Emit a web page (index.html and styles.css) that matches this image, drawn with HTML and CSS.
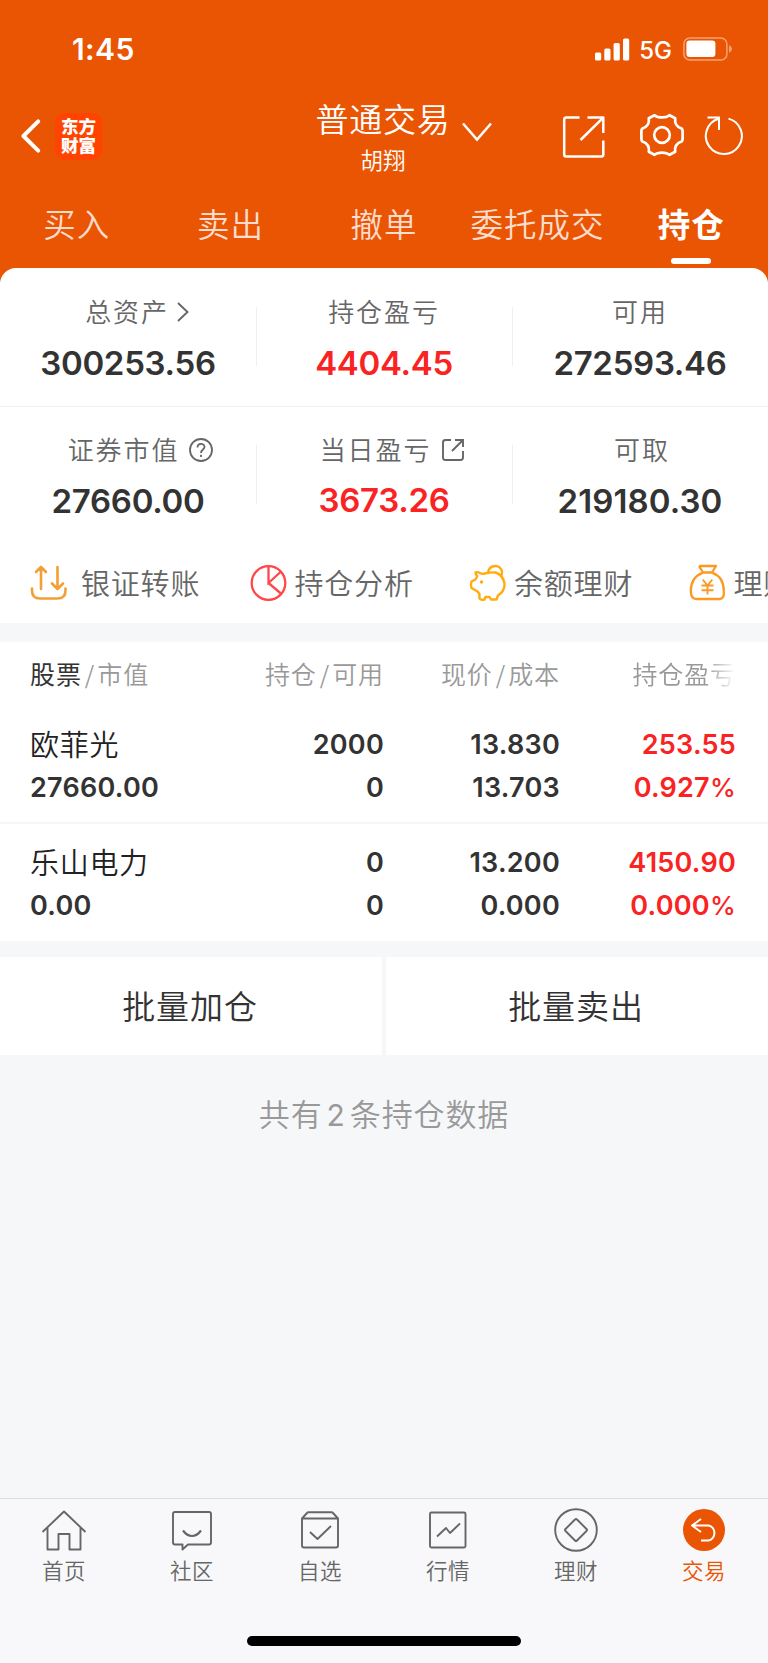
FILE: index.html
```html
<!DOCTYPE html>
<html lang="zh-CN">
<head>
<meta charset="utf-8">
<title>普通交易 - 持仓</title>
<link rel="stylesheet" href="styles.css">
</head>
<body>
<div class="app">
  <header class="top">
    <div class="status">
      <span class="time">1:45</span>
      <div class="status-right">
        <svg class="signal" width="35" height="23" viewBox="0 0 35 23" fill="#fff"><rect x="0" y="14.5" width="6.2" height="8" rx="1.6"/><rect x="9.3" y="10.5" width="6.2" height="12" rx="1.6"/><rect x="18.6" y="5" width="6.2" height="17.5" rx="1.6"/><rect x="28" y="0.5" width="6.2" height="22" rx="1.6"/></svg>
        <span class="net">5G</span>
        <svg class="battery" width="50" height="24" viewBox="0 0 50 24"><rect x="0.9" y="0.9" width="43" height="22.2" rx="6" fill="none" stroke="#f6a173" stroke-width="1.5"/><rect x="3.4" y="3.6" width="29" height="16.4" rx="3.2" fill="#fff"/><path d="M46 8.3q3 1.2 3 3.7t-3 3.7z" fill="#f6a173"/></svg>
      </div>
    </div>
    <div class="nav">
      <div class="nav-left">
        <svg class="back" width="22" height="36" viewBox="0 0 22 36"><path d="M18.2 3.3L3.4 18l14.8 14.7" fill="none" stroke="#fff" stroke-width="4" stroke-linecap="round" stroke-linejoin="round"/></svg>
        <div class="logo"><span>东方</span><span>财富</span></div>
      </div>
      <div class="title"><span class="title-main">普通交易</span><span class="title-sub">胡翔</span></div>
      <svg class="chev" width="32" height="22" viewBox="0 0 32 22"><path d="M2 2.5L16 18.5L30 2.5" fill="none" stroke="#fff" stroke-width="2.5"/></svg>
      <svg class="share" width="44" height="44" viewBox="0 0 44 44" fill="none" stroke="#fff" stroke-width="2.5" stroke-linejoin="round"><path d="M17.500 2.400H4.200a2 2 0 0 0-2 2V39.500a2 2 0 0 0 2 2H39.300a2 2 0 0 0 2-2V25.500M25.500 2.400H41.300V18M41 2.800L18.500 25"/></svg>
      <svg class="gear" width="46" height="46" viewBox="-23 -23 46 46" fill="none" stroke="#fff" stroke-width="2.7" stroke-linejoin="round"><path d="M-7.500-19.800C-4-16.800 4-16.800 7.500-19.800L13.200-16.800C12.500-11.500 15-8 19.600-6.500Q20.600-5.500 20.600-4V4Q20.600 5.500 19.600 6.500C15 8 12.500 11.500 13.200 16.800L7.500 19.800C4 16.800-4 16.800-7.500 19.800L-13.200 16.800C-12.500 11.500-15 8-19.600 6.500Q-20.600 5.500-20.600 4V-4Q-20.600-5.500-19.600-6.500C-15-8-12.500-11.500-13.200-16.800Z"/><circle r="7.800"/></svg>
      <svg class="refresh" width="40" height="42" viewBox="0 0 40 42" fill="none" stroke="#fff" stroke-width="2"><path d="M24.500 3.600A18 18 0 1 1 14.500 3.800M3.500 2.500H15V15"/></svg>
    </div>
    <nav class="tabs">
      <span class="tab">买入</span><span class="tab">卖出</span><span class="tab">撤单</span><span class="tab">委托成交</span><span class="tab active">持仓</span>
    </nav>
  </header>

  <main class="body">
    <section class="summary">
      <div class="cells">
        <div class="cell"><div class="label l-total">总资产<svg class="gt" width="14" height="20" viewBox="0 0 14 20"><path d="M2 1L11.500 10L2 19" fill="none" stroke="#666" stroke-width="1.900"/></svg></div><div class="value">300253.56</div></div>
        <div class="cell"><div class="label">持仓盈亏</div><div class="value red">4404.45</div></div>
        <div class="cell"><div class="label">可用</div><div class="value">272593.46</div></div>
      </div>
      <div class="cells second">
        <div class="cell"><div class="label l-market">证券市值<svg class="help" width="24" height="24" viewBox="0 0 24 24" fill="none" stroke="#666" stroke-width="1.800"><circle cx="12" cy="12" r="11"/><path d="M8.500 9.500C8.500 4.800 15.500 4.800 15.500 9C15.500 11.500 12 11.500 12 15M12 16.800v2.200"/></svg></div><div class="value">27660.00</div></div>
        <div class="cell"><div class="label l-day">当日盈亏<svg class="link" width="24" height="24" viewBox="0 0 24 24" fill="none" stroke="#666" stroke-width="1.900"><path d="M10 2H4.500A2.500 2.500 0 0 0 2 4.500V19.500A2.500 2.500 0 0 0 4.500 22H19.500A2.500 2.500 0 0 0 22 19.500V13M14 2H22V9M21.500 2.500L11 13"/></svg></div><div class="value red up">3673.26</div></div>
        <div class="cell"><div class="label l-cash">可取</div><div class="value wide">219180.30</div></div>
      </div>
      <div class="quick">
        <a class="q q1"><svg width="38" height="38" viewBox="0 0 38 38" fill="none" stroke="#f2a033" stroke-width="2.600" stroke-linecap="round" stroke-linejoin="round"><path d="M2 24.500V26.500Q2 34.500 10 34.500H27.500Q35.500 34.500 35.500 26.500V24.500M11 25V3M6 8L11 3L16 8M27.500 3V25M22 19.500L27.500 25L33 19.500"/></svg><span>银证转账</span></a>
        <a class="q q2"><svg width="38" height="38" viewBox="0 0 38 38" fill="none" stroke="#ff474c" stroke-width="2.300"><circle cx="18.500" cy="19" r="16.800"/><path d="M18.500 2V19L30.500 8M18.500 19L31.500 30"/></svg><span>持仓分析</span></a>
        <a class="q q3"><svg width="38" height="38" viewBox="0 0 38 38" fill="none" stroke="#ffad0d" stroke-width="2.400" stroke-linejoin="round"><path d="M18.500 9C15 9.500 13 10.500 12 9.500Q8 7.500 6.500 8.500Q6.500 10.500 8.200 12.200L6.500 15.500L2.500 17.500Q1.500 21 2.500 24L8.500 27.500L10.500 30V34.500Q12 36.500 15.500 35.500L16.500 33H20.500L22 35.500H27.500L29 31.500Q36 27 35.500 19.500Q34 11 26.500 8.500Q22 8 18.500 9M19 8.500C20.500 0 32 0 33 8Q33 10.500 32 12.500"/><circle cx="12.500" cy="18" r="1.700" fill="#ffad0d" stroke="none"/></svg><span>余额理财</span></a>
        <a class="q q4"><svg width="38" height="38" viewBox="0 0 38 38" fill="none" stroke="#fb9a22" stroke-width="2.300" stroke-linejoin="round"><path d="M10 2H27L23 8.500H14L10 2M13.500 8.800C5 12 1.800 19 1.800 27Q1.800 35 7.500 35H30.500Q35.500 35 34.800 27C34.800 19 32 12 23.500 8.800"/><path d="M13.700 15.500L18.500 21.500L23.300 15.500M12.500 21.500H24.500M12.500 26.300H24.500M18.500 21.500V30.500" stroke-width="1.900"/></svg><span>理财</span></a>
      </div>
    </section>

    <section class="holdings">
      <div class="thead">
        <span><b>股票</b><i>/</i>市值</span><span>持仓<i>/</i>可用</span><span>现价<i>/</i>成本</span><span class="fade">持仓盈亏</span>
      </div>
      <div class="row">
        <div><span class="name">欧菲光</span><span>27660.00</span></div>
        <div><span>2000</span><span>0</span></div>
        <div><span>13.830</span><span>13.703</span></div>
        <div class="red"><span>253.55</span><span>0.927<em>%</em></span></div>
      </div>
      <div class="row last">
        <div><span class="name">乐山电力</span><span>0.00</span></div>
        <div><span>0</span><span>0</span></div>
        <div><span>13.200</span><span>0.000</span></div>
        <div class="red"><span>4150.90</span><span>0.000<em>%</em></span></div>
      </div>
    </section>

    <div class="batch"><button class="btn">批量加仓</button><button class="btn">批量卖出</button></div>
    <p class="count">共有<span>2</span>条持仓数据</p>
  </main>

  <footer class="foot">
    <nav class="bar">
      <a class="item"><svg width="46" height="46" viewBox="0 0 46 46"><path d="M1.500 24L23 3.500L44.500 24M6.500 20V41.500H17.500V26H28.500V41.500H39.500V20"/></svg><span>首页</span></a>
      <a class="item"><svg width="46" height="46" viewBox="0 0 46 46"><path d="M6 4H40A2 2 0 0 1 42 6V34.500A2 2 0 0 1 40 36.500H19L13.500 41.500V36.500H6A2 2 0 0 1 4 34.500V6A2 2 0 0 1 6 4Z"/><path d="M14 22.500Q18 28 23 28T32 22.500" stroke-width="2.200"/></svg><span>社区</span></a>
      <a class="item"><svg width="46" height="46" viewBox="0 0 46 46"><path d="M5 10.500H41V37.500A2 2 0 0 1 39 39.500H7A2 2 0 0 1 5 37.500ZM5 10.500L10 5Q10.500 4.200 11.500 4.200H34.500Q35.500 4.200 36 5L41 10.500M13 24L20.500 31L34 18"/></svg><span>自选</span></a>
      <a class="item"><svg width="46" height="46" viewBox="0 0 46 46"><rect x="5" y="4.500" width="35.500" height="35" rx="1.500"/><path d="M12 28.500L21 20L25 25L35 15.500"/></svg><span>行情</span></a>
      <a class="item"><svg width="46" height="46" viewBox="0 0 46 46"><circle cx="23" cy="22" r="20.800"/><path d="M22 11.500Q23 10.500 24 11.500L33.500 21Q34.500 22 33.500 23L24 32.500Q23 33.500 22 32.500L12.500 23Q11.500 22 12.500 21Z"/></svg><span>理财</span></a>
      <a class="item on"><svg width="46" height="46" viewBox="0 0 46 46"><circle cx="23" cy="22" r="21" fill="#ea5504" stroke="none"/><path d="M20 11L11 17.500L20 24M11 17.500H27.500A7.700 7.700 0 0 1 27.500 32.500H20" stroke="#fff" stroke-width="2"/></svg><span>交易</span></a>
    </nav>
    <div class="home"></div>
  </footer>
</div>
</body>
</html>
```
FILE: styles.css
```css
* { box-sizing: border-box; }
body { margin: 0; font-family: "Noto Sans CJK SC", sans-serif; font-weight: 350; color: #333; }
svg { display: block; flex: none; }
i, em { font-style: normal; }
.app { width: 768px; height: 1663px; display: flex; flex-direction: column; background: #f6f7f9; overflow: hidden; }
.top { height: 282px; flex: none; background: #ea5504; color: #fff; }
.status { height: 98px; display: flex; justify-content: space-between; align-items: center; padding: 0 35px 0 72px; font-family: Inter, sans-serif; }
.time { font-size: 30px; font-weight: 600; letter-spacing: .4px; }
.status-right { display: flex; align-items: center; }
.net { font-size: 24px; font-weight: 500; margin: 3px 11px 0 9px; line-height: 24px; }
.nav { height: 91px; display: flex; align-items: flex-start; }
.nav-left { width: 317px; height: 76px; display: flex; align-items: center; padding-left: 20px; gap: 13px; }
.logo { width: 47px; height: 47px; border-radius: 9px; background: #ff4400; display: flex; flex-direction: column; align-items: center; justify-content: center; padding-bottom: 2px; font-size: 17.500px; font-weight: 900; line-height: 19.500px; }
.title { width: 132px; display: flex; flex-direction: column; align-items: center; white-space: nowrap; margin-right: 2px; }
.title-main { font-size: 33px; line-height: 40px; letter-spacing: .800px; }
.title-sub { font-size: 22.500px; line-height: 42px; }
.chev { margin: 23px 0 0 10px; }
.share { margin: 17px 0 0 69px; }
.gear { margin: 14px 0 0 33px; }
.refresh { margin: 17px 0 0 19px; }
.tabs { height: 79px; display: grid; grid-template-columns: repeat(5, 1fr); }
.tab { display: flex; flex-direction: column; align-items: center; font-size: 32.500px; letter-spacing: 1px; line-height: 67px; color: #fbdccd; white-space: nowrap; }
.tab.active { color: #fff; font-weight: 700; }
.tab.active::after { content: ""; width: 40px; height: 6px; border-radius: 3px; background: #fff; margin-top: 2px; }
.body { flex: 1; margin-top: -14px; }
.summary { height: 355px; background: #fff; border-radius: 16px 16px 0 0; }
.cells { height: 139px; display: grid; grid-template-columns: repeat(3, 1fr); padding-top: 24px; border-bottom: 1px solid #f0f0f1; }
.cells.second { border-bottom: 0; height: 138px; padding-top: 23px; }
.cell { display: flex; flex-direction: column; align-items: center; position: relative; }
.cell + .cell::before { content: ""; position: absolute; left: 0; top: 15px; width: 1px; height: 59px; background: #f0f0f0; }
.label { height: 37px; display: flex; align-items: center; font-size: 26px; line-height: 37px; letter-spacing: 1.900px; color: #666; }
.l-total { padding-left: 19px; }
.l-market { padding-left: 25px; }
.l-day { padding-left: 17px; }
.l-cash { padding-left: 4px; }
.gt { margin: 3px 0 0 7px; }
.help { margin: 2px 0 0 10px; }
.link { margin: 2px 0 0 10px; }
.value { font-family: Inter, sans-serif; font-weight: 600; font-size: 33px; line-height: 40px; margin-top: 14px; letter-spacing: -.3px; }
.value.up { margin-top: 13px; }
.value.wide { letter-spacing: .1px; }
.red { color: #fa2323; }
.quick { display: flex; height: 79px; overflow: hidden; padding-left: 30px; }
.q { display: flex; align-items: center; height: 74px; font-size: 29px; letter-spacing: .800px; color: #666; white-space: nowrap; flex: none; width: 219.500px; }
.q svg { margin-right: 7px; margin-top: 2px; }
.q1 svg { margin-right: 13px; }
.holdings { margin-top: 19px; height: 299px; background: #fff; }
.thead, .row { display: grid; grid-template-columns: 170px 184px 176px 176px; padding-left: 30px; }
.thead { height: 71px; font-size: 25px; line-height: 62px; letter-spacing: .900px; color: #999; text-align: right; white-space: nowrap; }
.thead span:first-child { text-align: left; }
.thead b { font-weight: 400; color: #333; }
.thead i { font-size: 24px; margin: 0 3px; line-height: 1; letter-spacing: 0; }
.fade { -webkit-mask-image: linear-gradient(to right, #000 83%, transparent 100%); mask-image: linear-gradient(to right, #000 83%, transparent 100%); }
.row { height: 111px; border-bottom: 2px solid #f5f6f7; padding-top: 11px; font-family: Inter, sans-serif; font-weight: 600; font-size: 27px; }
.row.last { height: 117px; border: 0; padding-top: 18px; }
.row > div { display: flex; flex-direction: column; align-items: flex-end; line-height: 42.500px; letter-spacing: .250px; }
.row > div:first-child { align-items: flex-start; }
.row em { font-weight: 500; font-size: 26px; }
.row .name { font-family: "Noto Sans CJK SC", sans-serif; font-weight: 350; font-size: 29px; letter-spacing: .700px; white-space: nowrap; height: 42.500px; line-height: 39px; color: #222; }
.batch { display: grid; grid-template-columns: 1fr 1fr; gap: 4px; margin-top: 16px; height: 98px; }
.btn { border: 0; background: #fff; color: #333; font: 350 33px/40px "Noto Sans CJK SC", sans-serif; letter-spacing: .900px; padding: 0 2px 2px 0; }
.count { margin: 36px 0 0; text-align: center; font-size: 31px; line-height: 44px; letter-spacing: .900px; color: #999; }
.count span { font-family: Inter, sans-serif; margin: 0 4px; font-weight: 400; font-size: 30px; }
.foot { height: 165px; flex: none; border-top: 1px solid #dedee0; background: #f8f8fa; display: flex; flex-direction: column; align-items: center; }
.bar { width: 768px; height: 137px; display: grid; grid-template-columns: repeat(6, 1fr); padding-top: 9px; }
.item { display: flex; flex-direction: column; align-items: center; font-size: 21.500px; line-height: 32px; letter-spacing: .500px; color: #666; }
.item svg { fill: none; stroke: #666; stroke-width: 1.900; stroke-linejoin: round; }
.item.on { color: #ea5504; }
.home { width: 274px; height: 10px; border-radius: 5px; background: #000; }
```
